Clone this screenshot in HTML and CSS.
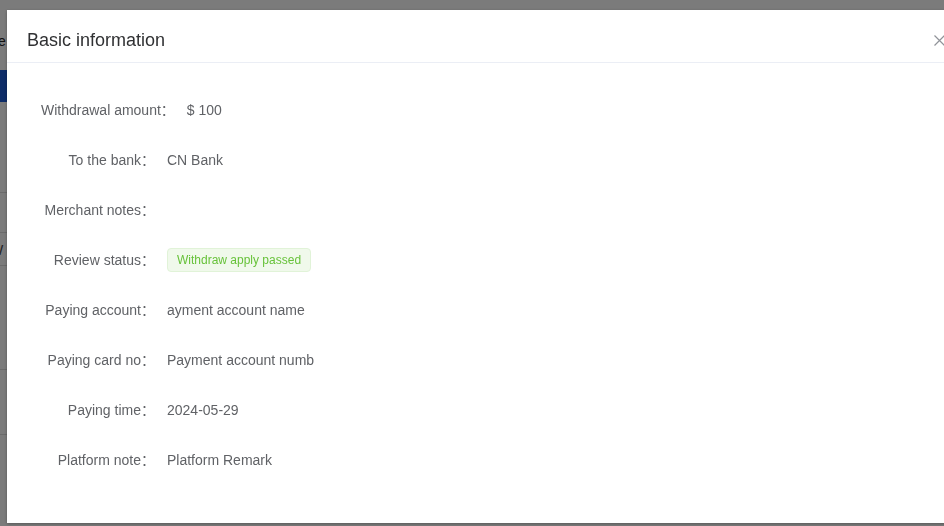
FILE: index.html
```html
<!DOCTYPE html>
<html lang="en">
<head>
    <meta charset="UTF-8">
    <meta name="viewport" content="width=device-width, initial-scale=1.0">
    <title>Withdrawal Detail</title>
    <link rel="stylesheet" href="styles.css">
</head>
<body>

    <!-- page behind the dialog -->
    <div class="page">
        <div class="page-title">Finance</div>
        <div class="page-tabs"></div>
        <div class="page-line line-a"></div>
        <div class="page-line line-b"></div>
        <div class="page-cell">W</div>
        <div class="page-line"></div>
        <div class="page-line line-c"></div>
        <div class="page-line line-d"></div>
    </div>

    <div class="mask"></div>

    <div class="dialog">
        <div class="dialog-header">
            <span class="dialog-title">Basic information</span>
            <span class="dialog-close" role="button" aria-label="Close">
                <svg width="11" height="11" viewBox="0 0 11 11">
                    <path d="M0.5 0.5L10.5 10.5M10.5 0.5L0.5 10.5" stroke="#909399" stroke-width="1.2" fill="none"/>
                </svg>
            </span>
        </div>

        <div class="dialog-body">
            <div class="info-row">
                <label class="info-label">Withdrawal amount<span class="colon">：</span></label>
                <span class="info-value">$ 100</span>
            </div>
            <div class="info-row">
                <label class="info-label">To the bank<span class="colon">：</span></label>
                <span class="info-value">CN Bank</span>
            </div>
            <div class="info-row">
                <label class="info-label">Merchant notes<span class="colon">：</span></label>
                <span class="info-value"></span>
            </div>
            <div class="info-row">
                <label class="info-label">Review status<span class="colon">：</span></label>
                <span class="info-value"><span class="tag tag-success">Withdraw apply passed</span></span>
            </div>
            <div class="info-row">
                <label class="info-label">Paying account<span class="colon">：</span></label>
                <span class="info-value">ayment account name</span>
            </div>
            <div class="info-row">
                <label class="info-label">Paying card no<span class="colon">：</span></label>
                <span class="info-value">Payment account numb</span>
            </div>
            <div class="info-row">
                <label class="info-label">Paying time<span class="colon">：</span></label>
                <span class="info-value">2024-05-29</span>
            </div>
            <div class="info-row">
                <label class="info-label">Platform note<span class="colon">：</span></label>
                <span class="info-value">Platform Remark</span>
            </div>
        </div>
    </div>

</body>
</html>
```

FILE: styles.css
```css
html, body {
    margin: 0;
    height: 100%;
    overflow: hidden;
}
body {
    font-family: "Liberation Sans", Arial, "Noto Sans CJK SC", sans-serif;
    background-color: #f4f4f5;
}

/* background page */
.page {
    height: 100%;
    background-color: #f7f7f7;
}
.page-title {
    padding-top: 33px;
    margin-left: -44px;
    height: 37px;
    font-size: 14px;
    color: #222;
}
.page-tabs {
    height: 32px;
    background-color: #1a58d0;
}
.page-line {
    height: 1px;
    background-color: #d6d6d6;
}
.line-a {
    margin-top: 90px;
}
.line-b {
    margin-top: 39px;
}
.page-cell {
    height: 32px;
    line-height: 34px;
    font-size: 14px;
    color: #444;
    margin-left: -10px;
}
.line-c {
    margin-top: 103px;
}
.line-d {
    margin-top: 64px;
}

.mask {
    position: fixed;
    inset: 0;
    background-color: rgba(0, 0, 0, 0.5);
}

/* dialog */
.dialog {
    position: fixed;
    top: 10px;
    left: 7px;
    width: 960px;
    height: 513px;
    background-color: #fff;
    box-shadow: 0 1px 3px rgba(0, 0, 0, 0.3);
}
.dialog-header {
    display: flex;
    align-items: flex-start;
    justify-content: space-between;
    box-sizing: border-box;
    height: 53px;
    padding: 18px 20px 0 20px;
    border-bottom: 1px solid #ebeef5;
}
.dialog-title {
    font-size: 18px;
    line-height: 24px;
    color: #303133;
}
.dialog-close {
    display: flex;
    width: 11px;
    height: 11px;
    margin: 7px 2px 0 0;
    cursor: pointer;
}
.dialog-body {
    padding: 27px 0 0 34px;
}
.info-row {
    display: flex;
    align-items: center;
    height: 40px;
    margin-bottom: 10px;
    font-size: 14px;
    line-height: 20px;
    color: #606266;
}
.info-label {
    min-width: 114px;
    padding-right: 12px;
    text-align: right;
    white-space: nowrap;
}
.colon {
    line-height: 0;
}
.info-value {
    white-space: nowrap;
}
.tag {
    display: inline-block;
    height: 22px;
    line-height: 22px;
    padding: 0 9px;
    font-size: 12px;
    border-radius: 4px;
    border: 1px solid;
}
.tag-success {
    background-color: #f0f9eb;
    border-color: #e1f3d8;
    color: #67c23a;
}
```
